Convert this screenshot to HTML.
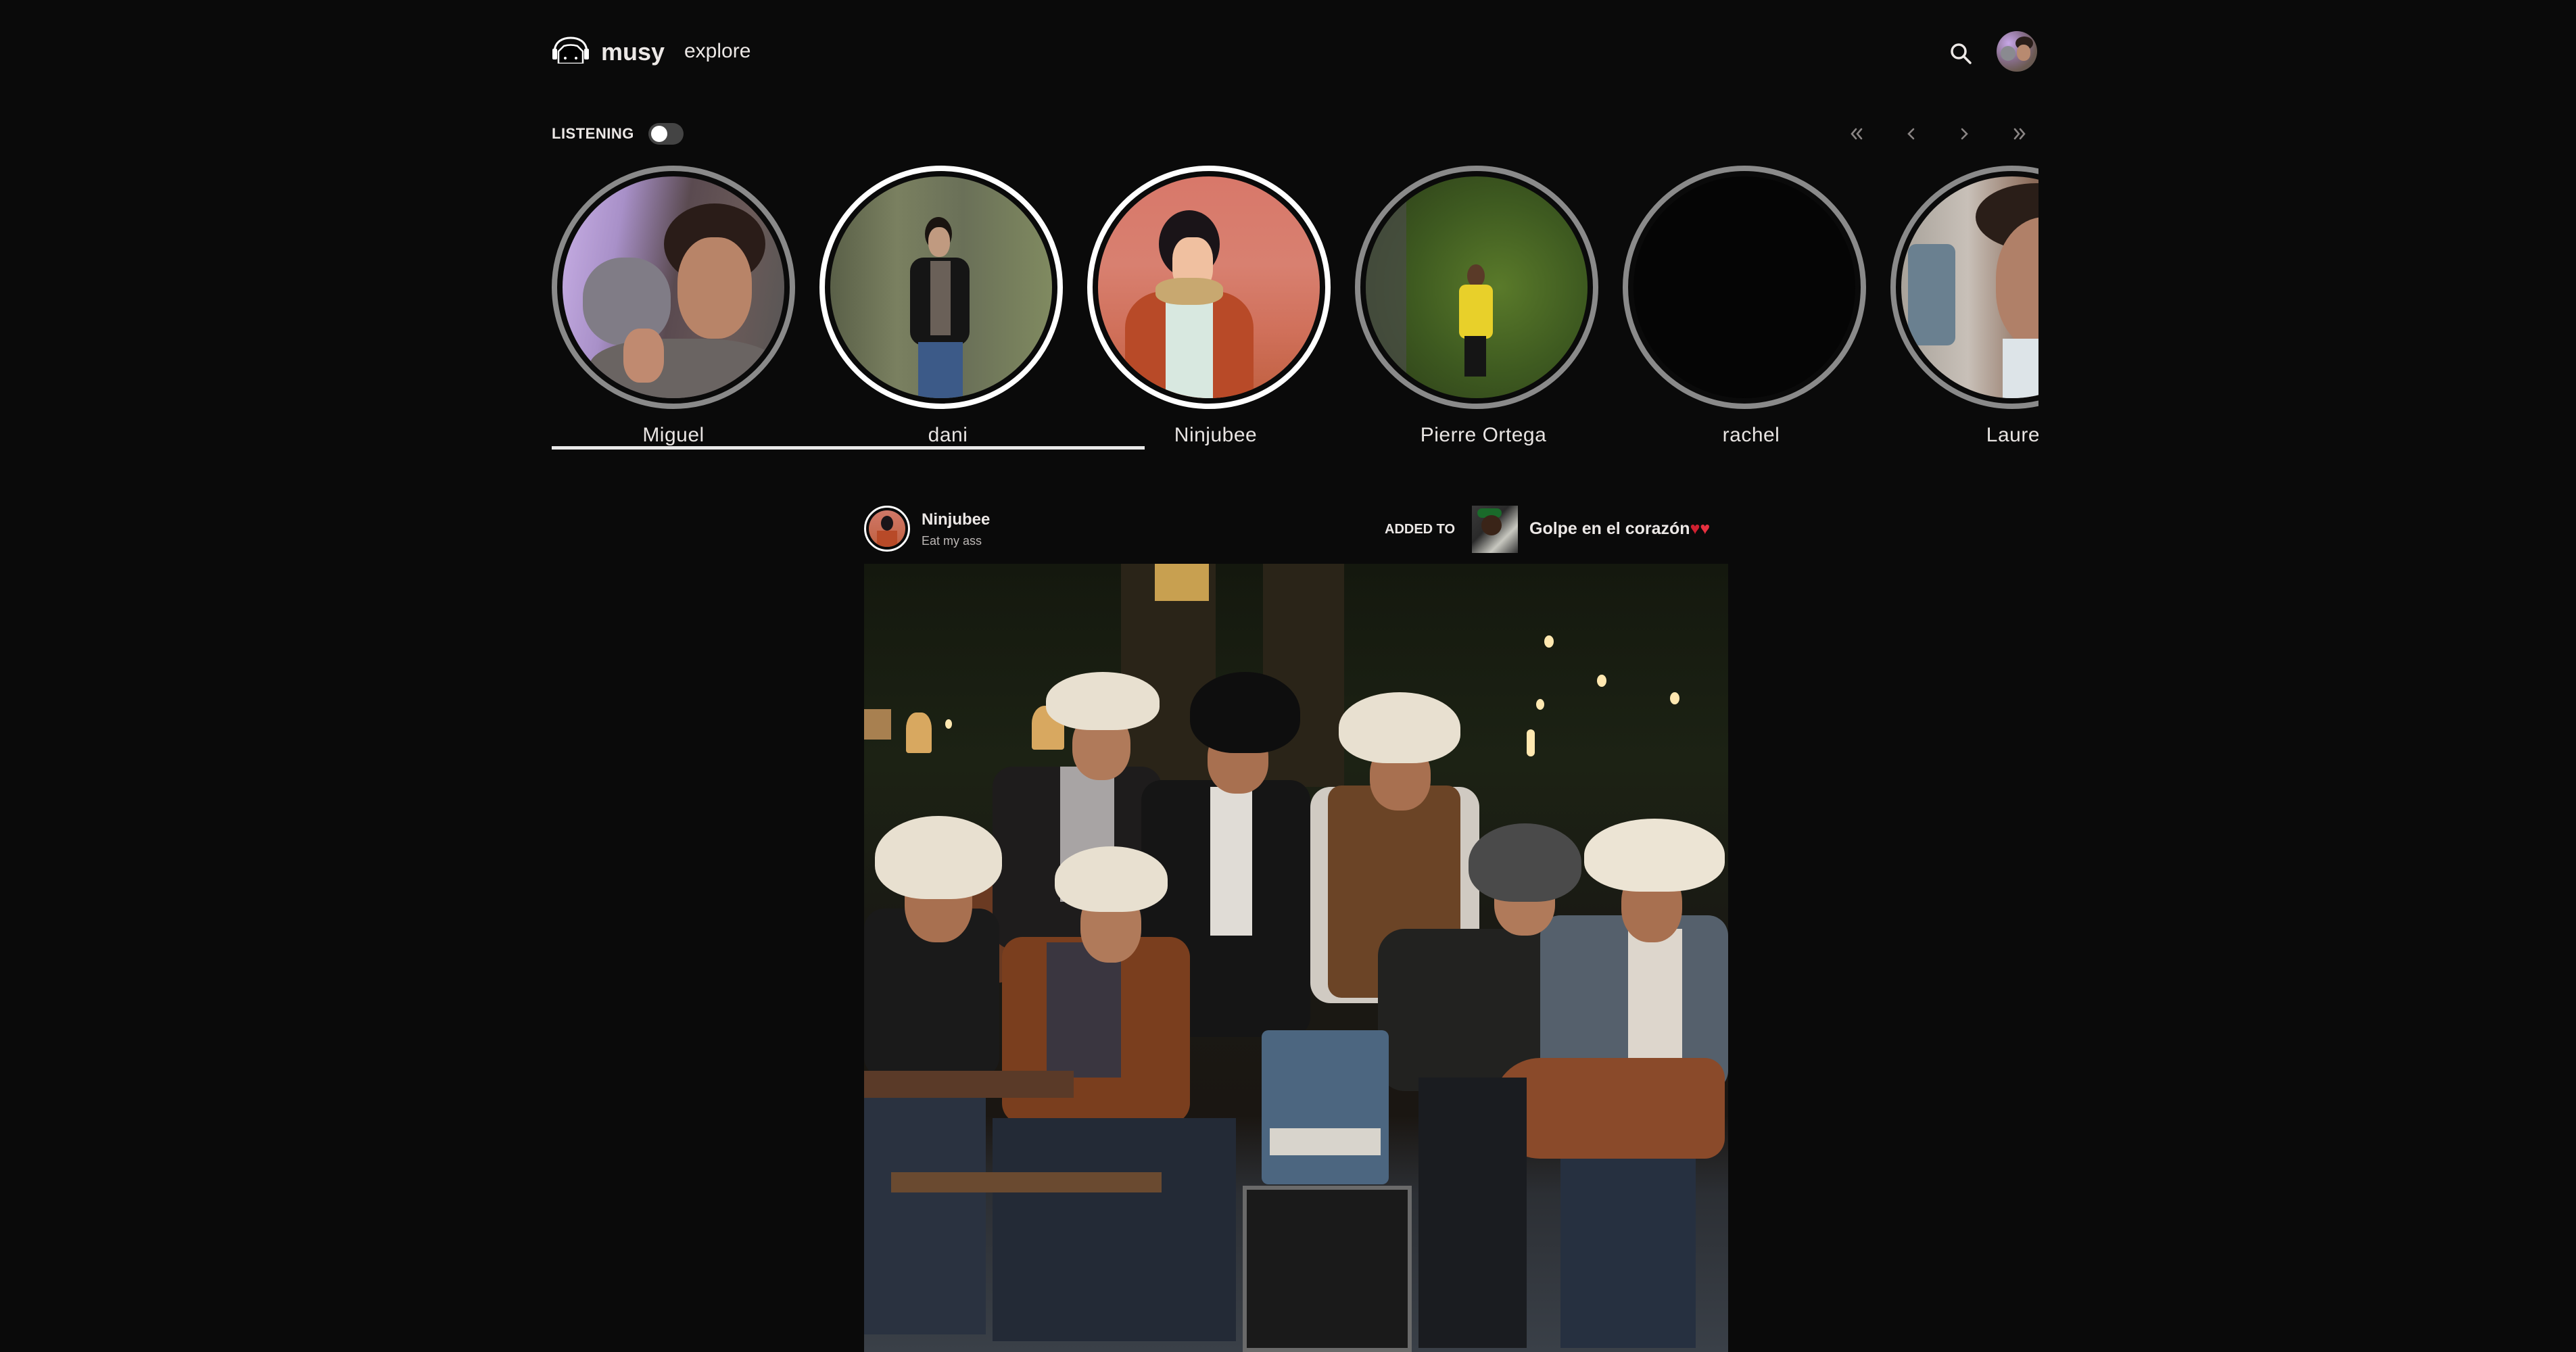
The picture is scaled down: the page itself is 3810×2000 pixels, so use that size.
<!DOCTYPE html>
<html><head><meta charset="utf-8">
<style>
html,body{margin:0;padding:0;background:#0a0a0a;}
body{width:3810px;height:2000px;position:relative;overflow:hidden;font-family:"Liberation Sans",sans-serif;color:#ece8e6;}
.abs{position:absolute;}
.ring{position:absolute;top:245px;width:344px;height:344px;border-radius:50%;border:8px solid #8a8a8a;}
.ring.w{border-color:#fff;}
.inner{position:absolute;left:8px;top:8px;right:8px;bottom:8px;border-radius:50%;overflow:hidden;background:#050505;}
.name{position:absolute;top:627px;width:360px;text-align:center;font-size:30px;font-weight:300;color:#e8e4e2;letter-spacing:0.5px;}
.p{position:absolute;}
</style></head><body>

<svg class="abs" style="left:816px;top:54px" width="56" height="40" viewBox="0 0 56 40">
 <path d="M4 24 C4 6 18 2 28 2 C38 2 52 6 52 24" fill="none" stroke="#fff" stroke-width="3"/>
 <rect x="1" y="18" width="7" height="16" rx="2" fill="#fff"/>
 <rect x="48" y="18" width="7" height="16" rx="2" fill="#fff"/>
 <path d="M10 40 L10 22 L18 14 Q28 11 38 14 L46 22 L46 40 Z" fill="#000" stroke="#fff" stroke-width="2.5"/>
 <circle cx="20" cy="32" r="2" fill="#fff"/><circle cx="36" cy="32" r="2" fill="#fff"/>
</svg>
<div class="abs" style="left:889px;top:56px;font-size:36px;font-weight:700;color:#ece8e6;">musy</div>
<div class="abs" style="left:1012px;top:59px;font-size:30px;color:#ece8e6;">explore</div>

<svg class="abs" style="left:2884px;top:63px" width="32" height="32" viewBox="0 0 32 32">
 <circle cx="13" cy="13" r="10" fill="none" stroke="#ece8e6" stroke-width="3.5"/>
 <line x1="20" y1="20" x2="30" y2="30" stroke="#ece8e6" stroke-width="3.5" stroke-linecap="round"/>
</svg>
<div class="abs" style="left:2953px;top:46px;width:60px;height:60px;border-radius:50%;overflow:hidden;background:radial-gradient(circle at 30% 30%,#c8a8e8 0,#8a7090 40%,#6b5a52 70%,#5a5550 100%);">
 <div class="p" style="left:6px;top:22px;width:22px;height:22px;border-radius:50%;background:#8a8a90;"></div>
 <div class="p" style="left:28px;top:8px;width:26px;height:20px;border-radius:50%;background:#2a1e1a;"></div>
 <div class="p" style="left:30px;top:20px;width:20px;height:24px;border-radius:45%;background:#b88a70;"></div>
</div>

<div class="abs" style="left:816px;top:185px;font-size:22px;font-weight:700;color:#ece8e6;letter-spacing:0.5px;">LISTENING</div>
<div class="abs" style="left:959px;top:182px;width:52px;height:32px;border-radius:16px;background:#444;">
 <div class="p" style="left:4px;top:4px;width:24px;height:24px;border-radius:50%;background:#fff;"></div>
</div>

<svg class="abs" style="left:2734px;top:185px" width="280" height="26" viewBox="0 0 280 26">
 <g fill="none" stroke="#8a8584" stroke-width="2.6" stroke-linecap="round">
  <path d="M11 6 L5 13 L11 20 M19 6 L13 13 L19 20"/>
  <path d="M96 6 L89 13 L96 20"/>
  <path d="M168 6 L175 13 L168 20"/>
  <path d="M246 6 L252 13 L246 20 M254 6 L260 13 L254 20"/>
 </g>
</svg>

<div style="position:absolute;left:0;top:0;width:3015px;height:700px;overflow:hidden;">
 <div class="ring" style="left:816px;"><div class="inner" style="background:linear-gradient(100deg,#c9b0e6 0,#a890c8 25%,#5a4a50 50%,#6a5a58 75%,#555 100%);">
  <div class="p" style="left:150px;top:40px;width:150px;height:120px;border-radius:50%;background:#2a1c18;"></div>
  <div class="p" style="left:170px;top:90px;width:110px;height:150px;border-radius:45%;background:#b88468;"></div>
  <div class="p" style="left:30px;top:120px;width:130px;height:130px;border-radius:45%;background:#807c86;"></div>
  <div class="p" style="left:40px;top:240px;width:280px;height:100px;border-radius:40%;background:#6a6462;"></div>
  <div class="p" style="left:90px;top:225px;width:60px;height:80px;border-radius:40%;background:#c08a70;"></div>
 </div></div>
 <div class="ring w" style="left:1212px;"><div class="inner" style="background:linear-gradient(90deg,#5a6048 0,#7a8060 30%,#6a7058 60%,#808a60 100%);">
  <div class="p" style="left:140px;top:60px;width:40px;height:50px;border-radius:50%;background:#1a1410;"></div>
  <div class="p" style="left:145px;top:75px;width:32px;height:44px;border-radius:45%;background:#c09a80;"></div>
  <div class="p" style="left:118px;top:120px;width:88px;height:130px;border-radius:20px;background:#151515;"></div>
  <div class="p" style="left:148px;top:125px;width:30px;height:110px;background:#6a6058;"></div>
  <div class="p" style="left:130px;top:245px;width:66px;height:90px;background:#3c5a88;"></div>
 </div></div>
 <div class="ring w" style="left:1608px;"><div class="inner" style="background:linear-gradient(180deg,#d8786a 0,#d88070 40%,#d0705a 70%,#c06040 100%);">
  <div class="p" style="left:90px;top:50px;width:90px;height:100px;border-radius:50%;background:#1a1418;"></div>
  <div class="p" style="left:110px;top:90px;width:60px;height:80px;border-radius:40%;background:#f0c0a0;"></div>
  <div class="p" style="left:40px;top:170px;width:190px;height:180px;border-radius:30% 30% 0 0;background:#b84a28;"></div>
  <div class="p" style="left:100px;top:170px;width:70px;height:180px;background:#d8e8e0;"></div>
  <div class="p" style="left:85px;top:150px;width:100px;height:40px;border-radius:40%;background:#c8a870;"></div>
 </div></div>
 <div class="ring" style="left:2004px;"><div class="inner" style="background:radial-gradient(circle at 60% 50%,#5a7a2a 0,#3e5a20 50%,#2a3a18 100%);">
  <div class="p" style="left:0;top:0;width:60px;height:344px;background:#4a4c48;opacity:.7;"></div>
  <div class="p" style="left:150px;top:130px;width:26px;height:34px;border-radius:50%;background:#5a3a28;"></div>
  <div class="p" style="left:138px;top:160px;width:50px;height:80px;border-radius:10px;background:#e8d02a;"></div>
  <div class="p" style="left:146px;top:236px;width:32px;height:60px;background:#151515;"></div>
 </div></div>
 <div class="ring" style="left:2400px;"><div class="inner"></div></div>
 <div class="ring" style="left:2796px;"><div class="inner" style="background:linear-gradient(90deg,#a8a29a 0,#c8c0b8 30%,#8a6a58 60%,#9a7058 100%);">
  <div class="p" style="left:110px;top:10px;width:180px;height:100px;border-radius:50%;background:#2a1e18;"></div>
  <div class="p" style="left:140px;top:60px;width:160px;height:200px;border-radius:45%;background:#b08068;"></div>
  <div class="p" style="left:10px;top:100px;width:70px;height:150px;border-radius:12px;background:#6a8090;"></div>
  <div class="p" style="left:150px;top:240px;width:200px;height:110px;background:#dde4e8;"></div>
 </div></div>
 <div class="name" style="left:816px;">Miguel</div>
 <div class="name" style="left:1222px;">dani</div>
 <div class="name" style="left:1618px;">Ninjubee</div>
 <div class="name" style="left:2014px;">Pierre Ortega</div>
 <div class="name" style="left:2410px;">rachel</div>
 <div class="name" style="left:2806px;">Lauren</div>
</div>
<div class="abs" style="left:816px;top:660px;width:877px;height:5px;background:#e8e8e8;"></div>

<div class="abs" style="left:1278px;top:748px;width:62px;height:62px;border-radius:50%;border:3px solid #fff;background:#0a0a0a;">
 <div class="p" style="left:4px;top:4px;width:54px;height:54px;border-radius:50%;overflow:hidden;background:linear-gradient(180deg,#d07868,#c06040);">
  <div class="p" style="left:18px;top:8px;width:18px;height:22px;border-radius:50%;background:#1a1418;"></div>
  <div class="p" style="left:12px;top:30px;width:30px;height:26px;background:#b84a28;"></div>
 </div>
</div>
<div class="abs" style="left:1363px;top:755px;font-size:24px;font-weight:700;color:#ece8e6;">Ninjubee</div>
<div class="abs" style="left:1363px;top:790px;font-size:18px;color:#bdb8b6;">Eat my ass</div>
<div class="abs" style="left:2048px;top:772px;font-size:20px;font-weight:700;color:#ece8e6;">ADDED TO</div>
<div class="abs" style="left:2177px;top:748px;width:68px;height:70px;background:linear-gradient(135deg,#3a3a3a,#2a2a2a 40%,#c8c8c0 70%,#333);">
 <div class="p" style="left:8px;top:4px;width:36px;height:14px;border-radius:8px;background:#1a6a2a;"></div>
 <div class="p" style="left:14px;top:14px;width:30px;height:30px;border-radius:50%;background:#3a2418;"></div>
</div>
<div class="abs" style="left:2262px;top:768px;font-size:25px;font-weight:700;color:#ece8e6;">Golpe en el corazón<span style="color:#d02030">♥</span><span style="color:#e83040">♥</span></div>

<div class="abs" style="left:1278px;top:834px;width:1278px;height:1166px;overflow:hidden;background:linear-gradient(180deg,#14180e 0,#1c2214 25%,#1a1a14 45%,#1a1612 70%,#2c2f34 80%,#3a4048 100%);">
 <div class="p" style="left:380px;top:0;width:140px;height:360px;background:#2a2418;"></div>
 <div class="p" style="left:590px;top:0;width:120px;height:330px;background:#2a2418;"></div>
 <div class="p" style="left:430px;top:0;width:80px;height:55px;background:#c8a050;"></div>
 <div class="p" style="left:62px;top:220px;width:38px;height:60px;border-radius:40% 40% 4px 4px;background:#d8a860;"></div>
 <div class="p" style="left:248px;top:210px;width:48px;height:65px;border-radius:40% 40% 4px 4px;background:#d8a860;"></div>
 <div class="p" style="left:0;top:215px;width:40px;height:45px;background:#a88050;"></div>
 <div class="p" style="left:1006px;top:106px;width:14px;height:18px;border-radius:50%;background:#ffe8b0;"></div>
 <div class="p" style="left:1084px;top:164px;width:14px;height:18px;border-radius:50%;background:#ffe8b0;"></div>
 <div class="p" style="left:1192px;top:190px;width:14px;height:18px;border-radius:50%;background:#ffe8b0;"></div>
 <div class="p" style="left:994px;top:200px;width:12px;height:16px;border-radius:50%;background:#ffe8b0;"></div>
 <div class="p" style="left:980px;top:245px;width:12px;height:40px;border-radius:6px;background:#ffe8b0;"></div>
 <div class="p" style="left:120px;top:230px;width:10px;height:14px;border-radius:50%;background:#ffe8b0;"></div>
 <div class="p" style="left:130px;top:470px;width:130px;height:150px;border-radius:50%;background:#6a3a22;"></div>
 <div class="p" style="left:190px;top:300px;width:250px;height:270px;border-radius:30px;background:#1e1c1c;"></div>
 <div class="p" style="left:290px;top:300px;width:80px;height:200px;background:#a8a4a4;"></div>
 <div class="p" style="left:410px;top:320px;width:250px;height:380px;border-radius:30px;background:#151515;"></div>
 <div class="p" style="left:512px;top:330px;width:62px;height:220px;background:#e0dcd6;"></div>
 <div class="p" style="left:660px;top:330px;width:250px;height:320px;border-radius:30px;background:#d0cac2;"></div>
 <div class="p" style="left:686px;top:328px;width:196px;height:314px;border-radius:20px;background:#6b4426;"></div>
 <div class="p" style="left:0;top:510px;width:200px;height:250px;border-radius:30px;background:#1a1a1a;"></div>
 <div class="p" style="left:0;top:760px;width:180px;height:380px;background:#2a3240;"></div>
 <div class="p" style="left:204px;top:552px;width:278px;height:276px;border-radius:30px;background:#7a3e1e;"></div>
 <div class="p" style="left:270px;top:560px;width:110px;height:200px;background:#3a3640;"></div>
 <div class="p" style="left:190px;top:820px;width:360px;height:330px;background:#232a36;"></div>
 <div class="p" style="left:0;top:750px;width:310px;height:40px;background:#5a3a28;"></div>
 <div class="p" style="left:760px;top:540px;width:300px;height:240px;border-radius:40px;background:#222220;"></div>
 <div class="p" style="left:1000px;top:520px;width:278px;height:260px;border-radius:30px;background:#55606c;"></div>
 <div class="p" style="left:1130px;top:540px;width:80px;height:220px;background:#ddd6cc;"></div>
 <div class="p" style="left:930px;top:731px;width:343px;height:149px;border-radius:70px 30px 30px 70px;background:#8a4a2a;"></div>
 <div class="p" style="left:820px;top:760px;width:160px;height:400px;background:#1a1c20;"></div>
 <div class="p" style="left:1030px;top:880px;width:200px;height:280px;background:#263040;"></div>
 <div class="p" style="left:588px;top:690px;width:188px;height:228px;border-radius:10px;background:#4c6680;"></div>
 <div class="p" style="left:600px;top:835px;width:164px;height:40px;background:#d8d4cc;"></div>
 <div class="p" style="left:560px;top:920px;width:250px;height:246px;background:#1a1a1a;border:6px solid #6a6a6a;box-sizing:border-box;"></div>
 <div class="p" style="left:40px;top:900px;width:400px;height:30px;background:#6a4a30;"></div>
 <div class="p" style="left:60px;top:440px;width:100px;height:120px;border-radius:45%;background:#a87050;"></div>
 <div class="p" style="left:320px;top:480px;width:90px;height:110px;border-radius:45%;background:#b07a5a;"></div>
 <div class="p" style="left:308px;top:220px;width:86px;height:100px;border-radius:45%;background:#b07a5a;"></div>
 <div class="p" style="left:508px;top:240px;width:90px;height:100px;border-radius:45%;background:#a87050;"></div>
 <div class="p" style="left:748px;top:265px;width:90px;height:100px;border-radius:45%;background:#a87050;"></div>
 <div class="p" style="left:932px;top:450px;width:90px;height:100px;border-radius:45%;background:#b07a5a;"></div>
 <div class="p" style="left:1120px;top:450px;width:90px;height:110px;border-radius:45%;background:#a87050;"></div>
 <div class="p" style="left:16px;top:373px;width:188px;height:123px;border-radius:50% 50% 40% 40%;background:#e8e0d0;"></div>
 <div class="p" style="left:282px;top:418px;width:167px;height:97px;border-radius:50% 50% 40% 40%;background:#e8e0d0;"></div>
 <div class="p" style="left:269px;top:160px;width:168px;height:86px;border-radius:50% 50% 40% 40%;background:#e8e0d0;"></div>
 <div class="p" style="left:482px;top:160px;width:163px;height:120px;border-radius:50% 50% 40% 40%;background:#0e0e0e;"></div>
 <div class="p" style="left:702px;top:190px;width:180px;height:105px;border-radius:50% 50% 40% 40%;background:#e8e0d0;"></div>
 <div class="p" style="left:894px;top:384px;width:167px;height:116px;border-radius:50% 50% 40% 40%;background:#4a4a4a;"></div>
 <div class="p" style="left:1065px;top:377px;width:208px;height:108px;border-radius:50% 50% 40% 40%;background:#ece4d4;"></div>
</div>

</body></html>
